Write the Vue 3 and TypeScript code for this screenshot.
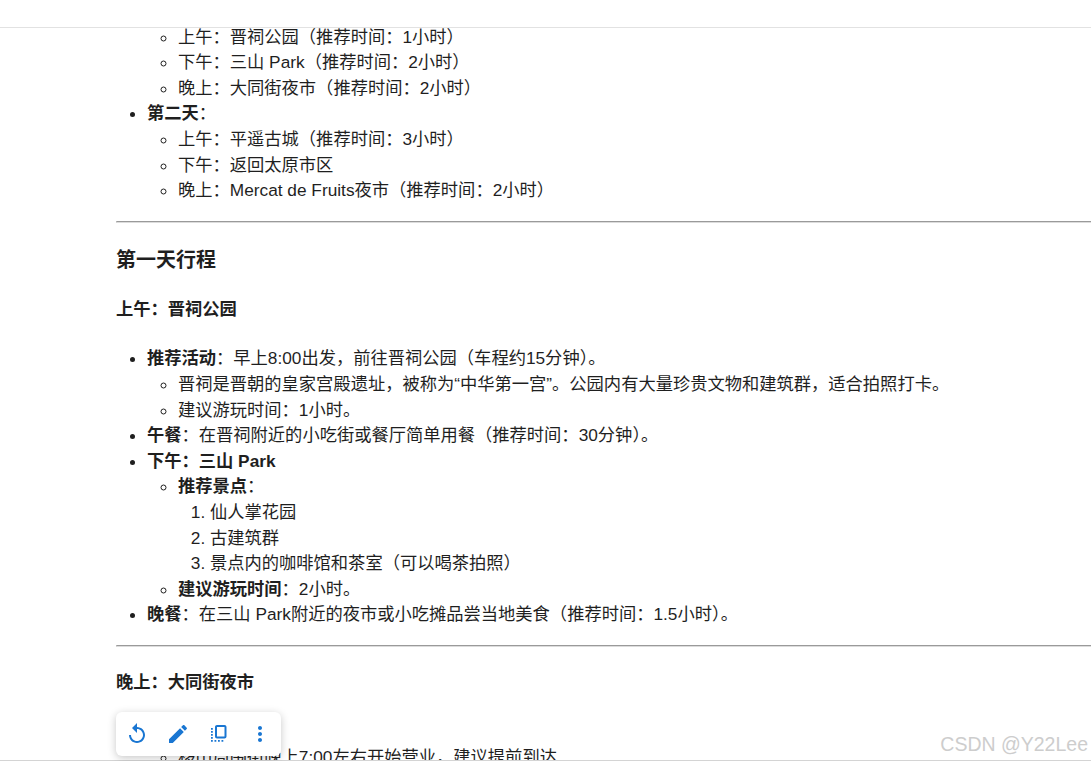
<script setup lang="ts">
const lastLine: string = '移山周围街晚上7:00左右开始营业\uFF0C建议提前到达'
</script>

<template>
  <div class="page">
    <header class="topbar"></header>
    <main class="doc">
      <ul class="sub first">
        <li>上午&#xFF1A;晋祠公园&#xFF08;推荐时间&#xFF1A;1小时&#xFF09;</li>
        <li>下午&#xFF1A;三山 Park&#xFF08;推荐时间&#xFF1A;2小时&#xFF09;</li>
        <li>晚上&#xFF1A;大同街夜市&#xFF08;推荐时间&#xFF1A;2小时&#xFF09;</li>
      </ul>
      <ul class="top">
        <li><strong>第二天</strong>&#xFF1A;
          <ul class="sub">
            <li>上午&#xFF1A;平遥古城&#xFF08;推荐时间&#xFF1A;3小时&#xFF09;</li>
            <li>下午&#xFF1A;返回太原市区</li>
            <li>晚上&#xFF1A;Mercat de Fruits夜市&#xFF08;推荐时间&#xFF1A;2小时&#xFF09;</li>
          </ul>
        </li>
      </ul>
      <hr />
      <h3>第一天行程</h3>
      <h4>上午&#xFF1A;晋祠公园</h4>
      <ul class="top">
        <li><strong>推荐活动</strong>&#xFF1A;早上8:00出发&#xFF0C;前往晋祠公园&#xFF08;车程约15分钟&#xFF09;。
          <ul class="sub">
            <li>晋祠是晋朝的皇家宫殿遗址&#xFF0C;被称为“中华第一宫”。公园内有大量珍贵文物和建筑群&#xFF0C;适合拍照打卡。</li>
            <li>建议游玩时间&#xFF1A;1小时。</li>
          </ul>
        </li>
        <li><strong>午餐</strong>&#xFF1A;在晋祠附近的小吃街或餐厅简单用餐&#xFF08;推荐时间&#xFF1A;30分钟&#xFF09;。</li>
        <li><strong>下午&#xFF1A;三山 Park</strong>
          <ul class="sub">
            <li><strong>推荐景点</strong>&#xFF1A;
              <ol>
                <li>仙人掌花园</li>
                <li>古建筑群</li>
                <li>景点内的咖啡馆和茶室&#xFF08;可以喝茶拍照&#xFF09;</li>
              </ol>
            </li>
            <li><strong>建议游玩时间</strong>&#xFF1A;2小时。</li>
          </ul>
        </li>
        <li><strong>晚餐</strong>&#xFF1A;在三山 Park附近的夜市或小吃摊品尝当地美食&#xFF08;推荐时间&#xFF1A;1.5小时&#xFF09;。</li>
      </ul>
      <hr />
      <h4>晚上&#xFF1A;大同街夜市</h4>
      <ul class="top">
        <li><strong>推荐活动</strong>&#xFF1A;
          <ul class="sub">
            <li>{{ lastLine }}</li>
          </ul>
        </li>
      </ul>
    </main>

    <div class="toolbar">
      <svg viewBox="0 0 24 24" class="icon"><path d="M12 5V1L7 6l5 5V7c3.31 0 6 2.69 6 6s-2.69 6-6 6-6-2.69-6-6H4c0 4.42 3.58 8 8 8s8-3.58 8-8-3.58-8-8-8z" /></svg>
      <svg viewBox="0 0 24 24" class="icon"><path d="M3 17.25V21h3.75L17.81 9.94l-3.75-3.75L3 17.25zM20.71 7.04c.39-.39.39-1.02 0-1.41l-2.34-2.34c-.39-.39-1.02-.39-1.41 0l-1.83 1.83 3.75 3.75 1.83-1.83z" /></svg>
      <svg viewBox="0 0 24 24" class="icon"><path d="M10 3h7.500c1.100 0 2 .9 2 2v9.500c0 1.100-.9 2-2 2H10c-1.100 0-2-.9-2-2V5c0-1.100.9-2 2-2zm0 2v9.500h7.500V5H10zM4 6h1.800v1.800H4V6zm0 3h1.800v1.800H4V9zm0 3h1.800v1.800H4V12zm0 3h1.800v1.800H4V15zm0 3h1.800v1.800H4V18zm3.500 0h1.800v1.800H7.500V18zm3.500 0h1.800v1.800H11V18zm3.500 0h1.800v1.800h-1.800V18z" /></svg>
      <svg viewBox="0 0 24 24" class="icon"><path d="M12 8c1.100 0 2-.9 2-2s-.9-2-2-2-2 .9-2 2 .9 2 2 2zm0 2c-1.100 0-2 .9-2 2s.9 2 2 2 2-.9 2-2-.9-2-2-2zm0 6c-1.100 0-2 .9-2 2s.9 2 2 2 2-.9 2-2-.9-2-2-2z" /></svg>
    </div>

    <div class="watermark">CSDN @Y22Lee</div>
    <div class="bottom-line"></div>
  </div>
</template>

<style>
html, body { margin: 0; background: #fff; overflow: hidden; }
</style>

<style scoped>
.page {
  position: relative;
  width: 1091px;
  height: 761px;
  overflow: hidden;
  background: #fff;
  color: #1f1f1f;
  font-family: "Liberation Sans", "Noto Sans CJK SC", sans-serif;
  font-size: 17.28px;
  line-height: 25.6px;
}
.topbar {
  position: absolute;
  top: 0; left: 0; right: 0;
  height: 27px;
  background: #fff;
  border-bottom: 1px solid #e2e2e2;
  z-index: 2;
}
.doc {
  width: 1100px;
  margin-left: 116px;
  padding-top: 24.7px;
}
ul, ol { margin: 0; padding-left: 32px; }
.top { list-style: disc; padding-left: 31px; }
.sub { list-style: circle; padding-left: 31px; }
.first { padding-left: 62px; }
strong { font-weight: 700; }
hr {
  margin: 17.4px 0 0;
  height: 0;
  border: 0;
  border-top: 1px solid #9a9a9a;
  border-left: 1px solid #cfcfcf;
  border-bottom: 1px solid #dcdcdc;
}
h3 {
  margin: 21px 0 0;
  font-size: 20px;
  line-height: 32px;
  font-weight: 700;
}
h4 {
  margin: 21px 0 0;
  font-size: 17.28px;
  line-height: 25.6px;
  font-weight: 700;
}
h4 + ul { margin-top: 23.6px; }
hr + h4 { margin-top: 23px; }
.toolbar {
  position: absolute;
  left: 116px;
  top: 712px;
  width: 165px;
  height: 44px;
  display: flex;
  align-items: center;
  justify-content: space-between;
  padding: 0 9px;
  box-sizing: border-box;
  background: #fff;
  border-radius: 6px;
  box-shadow: 0 2px 8px rgba(0, 0, 0, 0.22);
  z-index: 3;
}
.icon { width: 24px; height: 24px; fill: #1976d2; flex: none; }
.watermark {
  position: absolute;
  right: 3px;
  top: 733px;
  font-size: 19.5px;
  line-height: 22px;
  color: #cdcdcd;
  z-index: 3;
}
.bottom-line {
  position: absolute;
  left: 0; right: 0; bottom: 0;
  height: 1px;
  background: #d4d4d4;
  z-index: 2;
}
</style>
